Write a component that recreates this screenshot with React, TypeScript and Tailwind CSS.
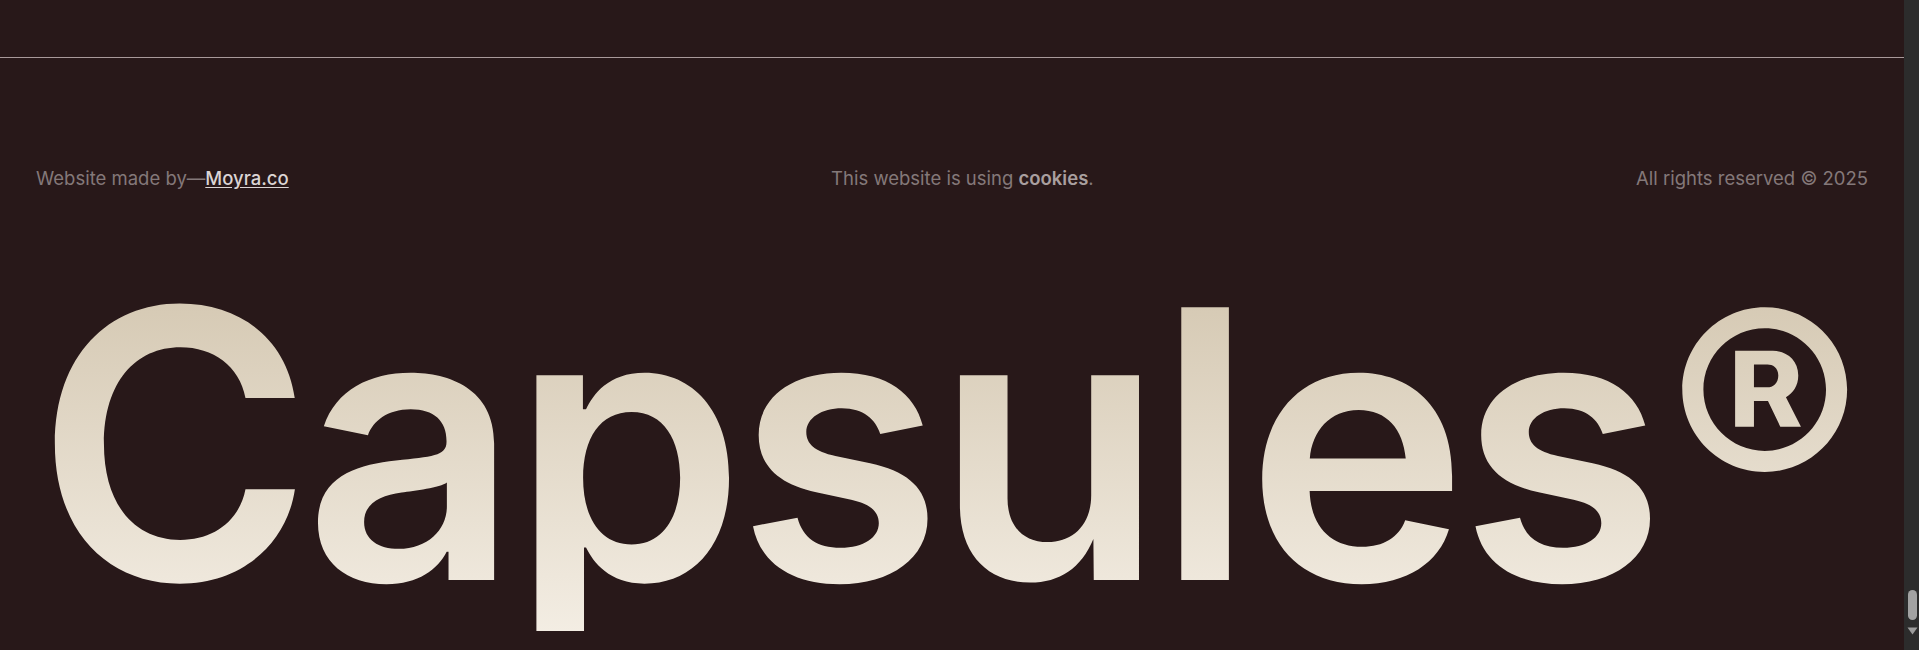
const Scrollbar = () => (
  <div className="w-[15px] shrink-0 bg-[#2c2c2c] flex flex-col pb-[15px]">
    <div className="flex-1" />
    <div className="ml-[4px] w-[9px] h-[30px] rounded-full bg-[#a2a2a2]" />
    <svg className="mt-[7px] ml-[3px]" width="11" height="8" viewBox="0 0 11 8">
      <path d="M0.5 0.5 H10.5 L5.5 7.5 Z" fill="#9c9c9c" />
    </svg>
  </div>
);

const App = () => {
  return (
    <div className="h-[650px] flex overflow-hidden bg-[#281819] font-['Inter',sans-serif]">
      <main className="flex-1 min-w-0 flex flex-col">
        <div className="h-[58px] shrink-0 border-b border-[#a8999a]" />

        <footer className="flex-1 overflow-hidden">
          <div className="flex justify-between items-center px-9 pt-[106px] text-[18.5px] leading-[28px] text-[#847879]">
            <p>
              Website made by—
              <a href="#" className="text-[#dbd4d4] font-medium underline underline-offset-2">
                Moyra.co
              </a>
            </p>
            <p>
              This website is using{" "}
              <span className="font-semibold text-[#a99f9f]">cookies</span>.
            </p>
            <p>All rights reserved © 2025</p>
          </div>

          <div className="px-9 mt-[64px]">
            <h1 className="text-[375px] leading-none font-semibold tracking-[-0.022em] whitespace-nowrap bg-gradient-to-b from-[#d2c5ae] to-[#f3ede3] bg-clip-text text-transparent">
              Capsules
              <span className="ml-[11px] text-[290px] align-[59px] tracking-normal">®</span>
            </h1>
          </div>
        </footer>
      </main>

      <Scrollbar />
    </div>
  );
};

export default App;
